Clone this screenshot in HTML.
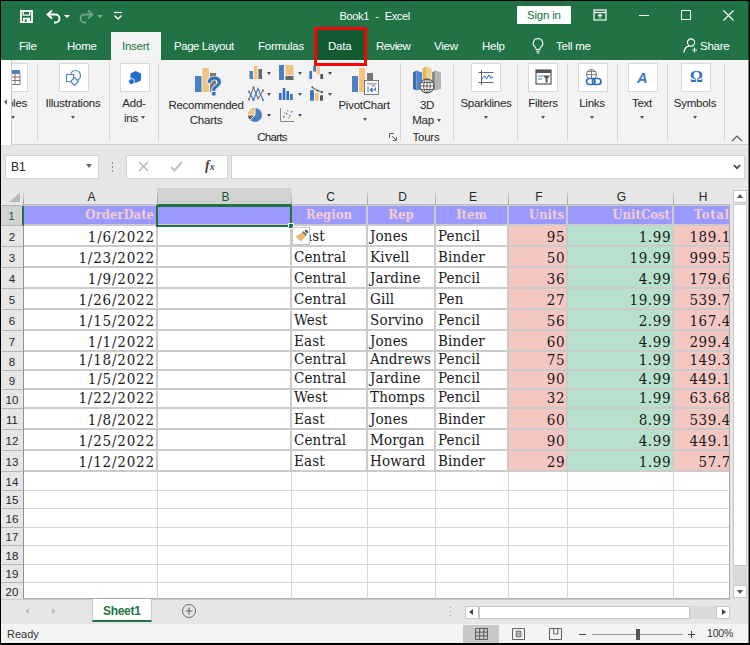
<!DOCTYPE html>
<html lang="en">
<head>
<meta charset="utf-8">
<title>Book1 - Excel</title>
<style>
*{box-sizing:border-box;margin:0;padding:0}
html,body{width:750px;height:645px;overflow:hidden;background:#000}
body{font-family:"Liberation Sans",sans-serif;font-size:12px;color:#262626;position:relative}
#app{position:absolute;left:1px;top:1px;width:748px;height:642px;background:#e6e6e6;overflow:hidden}
#app>*{position:absolute}
.abs{position:absolute}
/* coordinates inside #app are offset by -1 from page coordinates; use wrapper */
#w{position:absolute;left:-1px;top:-1px;width:750px;height:645px}
#w>*{position:absolute}
#title{left:0;top:0;width:750px;height:60px;background:#217346}
#title *{position:absolute}
.tt{color:#fff;font-size:11.5px;letter-spacing:-.2px;white-space:nowrap;line-height:14px}
#tabs span{color:#fff;font-size:11.5px;letter-spacing:-.25px;top:38px;line-height:16px;white-space:nowrap}
#ribbon{left:0;top:60px;width:750px;height:85px;background:#f3f3f3;border-bottom:1px solid #d0d0d0}
#ribbon *{position:absolute}
.sep{width:1px;background:#d4d4d4;top:3px;height:78px}
.lbl{font-size:11.5px;letter-spacing:-.25px;color:#262626;white-space:nowrap;text-align:center;line-height:17px;transform:translateX(-50%)}
.ibox{width:30px;height:29px;background:#fff;border:1px solid #d9d9d9;top:3px}
.dd{width:0;height:0;margin-left:.5px;border-left:2.500px solid transparent;border-right:2.500px solid transparent;border-top:3px solid #555}
#fbar{left:0;top:145px;width:750px;height:43px;background:#e6e6e6}
#fbar *{position:absolute}
#grid{left:0;top:0;width:731px;height:599px;background:transparent}
#grid *{position:absolute}
#gridbg{left:23px;top:205px;width:707px;height:394px;background:#fff;border-right:1px solid #ababab;border-bottom:1px solid #b0b0b0}
.vl{width:1px;top:205px;height:394px;background:#d6d6d6}
.hl{height:1px;left:23px;width:706px;background:#d6d6d6}
.cl{background:#fff;border:0 solid #cbcbcb;border-left-width:2px;border-top-width:2px;font-family:"DejaVu Serif Condensed","DejaVu Serif","Liberation Serif",serif;font-size:15px;color:#1a1a1a;white-space:nowrap;overflow:hidden}
.cl span{position:static!important}
.cl.ar{text-align:right;padding-right:.9px;letter-spacing:.6px}
.cl.ar span{position:relative!important;top:1px}
.cl.dt{letter-spacing:.8px;padding-right:1.2px}
.cl.last{padding-right:0}
.cl.last span{margin-right:-2px}
.cl.al{letter-spacing:.15px}
.cl.cd{padding-left:4px}
.cl.al{text-align:left;padding-left:2px}
.cl.ac{text-align:center}
.cl.h{background:#9999ff;color:#f6ccd0;font-weight:bold;font-size:13px;letter-spacing:0;padding-top:0}
.cl.h span{position:relative!important;top:-1.500px!important}
.cl.h.ar{padding-right:2px}
.cl.h.last{padding-right:0;letter-spacing:.7px}
.cl.h.last span{margin-right:-.7px}
.cl.lr{border-bottom-width:2px}
.cl.pk{background:#f4c7c3}
.cl.gn{background:#b7e1cd}
#colhdr *,#rowhdr *{position:absolute}
.ch{top:188px;height:17px;background:#e6e6e6;border-bottom:1px solid #bdbdbd;text-align:center;padding-left:3px;font-size:12px;line-height:18px;color:#262626}
.ch::before{content:"";position:absolute;left:0;top:1px;width:1px;height:16px;background:linear-gradient(rgba(150,150,150,0),#999)}
.ch.sel{background:#d2d2d2;color:#185a34;border-bottom:2px solid #217346;height:18px}
.rh{left:1px;width:23px;background:#e6e6e6;border-bottom:1px solid #b4b4b4;border-right:1px solid #929292;text-align:center;font-size:11.500px;color:#262626}
.rh.sel{background:#d2d2d2;color:#185a34;border-right:2px solid #217346}
#sheetbar{left:0;top:599px;width:750px;height:25px;background:#e6e6e6}
#sheetbar *{position:absolute}
#status{left:0;top:624px;width:750px;height:19px;background:#f3f3f3}
#status *{position:absolute}
</style>
</head>
<body>
<div id="app"><div id="w">

<!-- ================= TITLE + TABS ================= -->
<div id="title">
  <!-- save -->
  <svg style="left:20px;top:10px" width="13" height="13" viewBox="0 0 13 13"><path d="M1 1h11v11h-11z" fill="none" stroke="#fff" stroke-width="1.800"/><path d="M3.300 1v4.200h6.400v-4.200" fill="none" stroke="#fff" stroke-width="1.300"/><path d="M3 12v-4.300h7v4.300z" fill="#fff"/><rect x="4.800" y="9.300" width="1.800" height="2.700" fill="#217346"/></svg>
  <!-- undo -->
  <svg style="left:45px;top:8px" width="18" height="16" viewBox="0 0 18 16"><path d="M7 2.5L2.5 6.5L7 10.5" fill="none" stroke="#fff" stroke-width="1.8"/><path d="M3 6.5h7.5a4 4 0 0 1 0 8h-1.5" fill="none" stroke="#fff" stroke-width="1.8"/></svg>
  <i style="left:64px;top:15px;border-left:3px solid transparent;border-right:3px solid transparent;border-top:3px solid #fff;width:0;height:0"></i>
  <!-- redo faded -->
  <svg style="left:77px;top:8px;opacity:.35" width="18" height="16" viewBox="0 0 18 16"><path d="M11 2.5L15.5 6.5L11 10.5" fill="none" stroke="#fff" stroke-width="1.8"/><path d="M15 6.5h-7.500a4 4 0 0 0 0 8h1.500" fill="none" stroke="#fff" stroke-width="1.8"/></svg>
  <i style="left:97px;top:15px;opacity:.4;border-left:3px solid transparent;border-right:3px solid transparent;border-top:3px solid #fff;width:0;height:0"></i>
  <!-- qat customize -->
  <svg style="left:113px;top:11px" width="10" height="10" viewBox="0 0 10 10"><path d="M1 1.5h8" stroke="#fff" stroke-width="1.2"/><path d="M1.5 4.5L5 8L8.500 4.500" fill="none" stroke="#fff" stroke-width="1.3"/></svg>

  <span class="tt" style="left:339.500px;top:9px;font-size:11px;letter-spacing:-.35px;word-spacing:3.500px">Book1 - Excel</span>

  <div style="left:517px;top:6px;width:54px;height:18px;background:#fff;border-radius:1px"></div>
  <span class="tt" style="left:527px;top:8px;color:#217346">Sign in</span>

  <!-- ribbon display options -->
  <svg style="left:593px;top:9px" width="14" height="13" viewBox="0 0 14 13"><rect x="1" y="1" width="12" height="10" fill="none" stroke="#fff" stroke-width="1.2"/><path d="M1 3.500h12" stroke="#fff" stroke-width="1.2"/><path d="M7 9.500V5.500M5 7.200L7 5.300L9 7.200" fill="none" stroke="#fff" stroke-width="1.1"/></svg>
  <i style="left:639px;top:15px;width:10px;height:1px;background:#fff"></i>
  <i style="left:681px;top:10px;width:10px;height:10px;border:1px solid #fff"></i>
  <svg style="left:723px;top:10px" width="11" height="11" viewBox="0 0 11 11"><path d="M.5 .5l10 10M10.500 .5l-10 10" stroke="#fff" stroke-width="1.1"/></svg>

  <div id="tabs">
    <div style="left:111px;top:32px;width:50px;height:28px;background:#f3f3f3"></div>
    <div style="left:317px;top:30px;width:47px;height:30px;background:#125b32"></div>
    <span style="left:19px">File</span>
    <span style="left:67px">Home</span>
    <span style="left:122px;color:#217346">Insert</span>
    <span style="left:174px;letter-spacing:-.45px">Page Layout</span>
    <span style="left:258px">Formulas</span>
    <span style="left:328px">Data</span>
    <span style="left:376px;letter-spacing:-.6px">Review</span>
    <span style="left:434px">View</span>
    <span style="left:482px">Help</span>
    <!-- bulb -->
    <svg style="left:531px;top:37px" width="14" height="18" viewBox="0 0 14 18"><path d="M7 1.500a4.800 4.800 0 0 0 -2.600 8.800c.6 .6 .8 1.300 .8 2.200h3.600c0 -.9 .2 -1.600 .8 -2.200a4.800 4.800 0 0 0 -2.600 -8.800z" fill="none" stroke="#fff" stroke-width="1.1"/><path d="M5.200 14.200h3.600M5.700 16h2.600" stroke="#fff" stroke-width="1"/></svg>
    <span style="left:556px">Tell me</span>
    <!-- share icon -->
    <svg style="left:683px;top:37px" width="16" height="17" viewBox="0 0 16 17"><circle cx="8" cy="5.500" r="3.600" fill="none" stroke="#fff" stroke-width="1.2"/><path d="M1 15.500c.4 -4 2.600 -6 5 -6.300" fill="none" stroke="#fff" stroke-width="1.2"/><path d="M11.500 10.500v5M9 13h5" stroke="#fff" stroke-width="1.2"/></svg>
    <span style="left:700px">Share</span>
  </div>
  <!-- red highlight -->
  <div style="left:314px;top:27px;width:53px;height:39px;border:3px solid #fa0307;z-index:5"></div>
</div>

<!-- ================= RIBBON ================= -->
<div id="ribbon">
  <div style="left:1px;top:0;width:11px;height:85px;background:#fff;border-right:1px solid #c6c6c6;z-index:3"></div>
  <i style="left:4px;top:39px;z-index:4;width:0;height:0;border-top:3px solid transparent;border-bottom:3px solid transparent;border-right:3px solid #666"></i>

  <!-- Tables (cut) -->
  <div class="ibox" style="left:11px;width:17px;border-left:none"></div>
  <svg style="left:11px;top:9px" width="10" height="18" viewBox="0 0 10 18"><rect x="0" y="1" width="9" height="3.500" fill="#4a7fc1"/><path d="M0 4.500h9v11h-9M0 8h9M0 11.500h9M4 4.500v11" fill="none" stroke="#777" stroke-width="1"/></svg>
  <span class="lbl" style="left:17px;top:35px">bles</span>
  <i class="dd" style="left:10px;top:56px"></i>
  <i class="sep" style="left:37px"></i>

  <!-- Illustrations -->
  <div class="ibox" style="left:59px"></div>
  <svg style="left:64px;top:8px" width="20" height="20" viewBox="0 0 20 20"><circle cx="11.500" cy="7.500" r="5" fill="none" stroke="#4a7fc1" stroke-width="1.1"/><path d="M2.500 6.500h7v7h-7z" fill="#fff" stroke="#4a7fc1" stroke-width="1.100"/><path d="M10.500 9.500l4 4l-4 4l-4 -4z" fill="#fff" stroke="#4a7fc1" stroke-width="1.100"/></svg>
  <span class="lbl" style="left:73px;top:35px">Illustrations</span>
  <i class="dd" style="left:70px;top:56px"></i>
  <i class="sep" style="left:109px"></i>

  <!-- Add-ins -->
  <div class="ibox" style="left:120px"></div>
  <svg style="left:126px;top:9px" width="18" height="18" viewBox="0 0 18 18"><path d="M9.500 2l5.500 2.500v7l-5.500 2.500l-5 -2.500v-7z" fill="#1f6fd0"/><circle cx="5.500" cy="12.500" r="3" fill="#1f6fd0" stroke="#fff" stroke-width="1"/></svg>
  <span class="lbl" style="left:134px;top:35px">Add-</span>
  <span class="lbl" style="left:131px;top:50px">ins</span>
  <i class="dd" style="left:140px;top:56px"></i>
  <i class="sep" style="left:158px"></i>

  <!-- Recommended Charts -->
  <svg style="left:193px;top:6px" width="30" height="32" viewBox="0 0 30 32"><rect x="2" y="10" width="6.500" height="16" fill="#4a7fc1"/><rect x="9.500" y="2" width="6.500" height="24" fill="#f0c47c"/><rect x="17" y="7" width="6" height="19" fill="#777"/><text x="14" y="29" font-family="Liberation Sans, sans-serif" font-size="25.500" fill="#2e6fc0" stroke="#f3f3f3" stroke-width="2.600" paint-order="stroke">?</text><text x="14" y="29" font-family="Liberation Sans, sans-serif" font-size="25.500" fill="#3571bd" stroke="#3571bd" stroke-width=".9">?</text></svg>
  <span class="lbl" style="left:206px;top:37px">Recommended</span>
  <span class="lbl" style="left:206px;top:52px">Charts</span>

  <!-- small chart icons col 1 -->
  <svg style="left:249px;top:4px" width="16" height="16" viewBox="0 0 16 16"><rect x=".5" y="7" width="3.500" height="8" fill="#4a7fc1"/><rect x="5" y="2" width="3.500" height="13" fill="#f0c47c"/><rect x="9.500" y="5" width="3.500" height="10" fill="#666"/></svg>
  <i class="dd" style="left:266px;top:12px"></i>
  <svg style="left:247px;top:26px" width="18" height="16" viewBox="0 0 18 16"><path d="M2 13.500L6.500 1.500L11 13L16 4.500" fill="none" stroke="#777" stroke-width="1.100"/><path d="M2 5.500L6.500 14L11 2.500L16 14" fill="none" stroke="#3b78c4" stroke-width="1.200"/><g fill="#3b78c4"><circle cx="2" cy="5.500" r="1"/><circle cx="6.500" cy="14" r="1"/><circle cx="16" cy="14" r="1"/></g><g fill="#666"><circle cx="2" cy="13.500" r="1"/><circle cx="6.500" cy="1.500" r="1"/><circle cx="16" cy="4.500" r="1"/></g></svg>
  <i class="dd" style="left:266px;top:33px"></i>
  <svg style="left:247px;top:46.500px" width="16" height="16" viewBox="0 0 16 16"><circle cx="8" cy="8" r="7" fill="#4a7fc1"/><path d="M8 8V1A7 7 0 0 0 1 8z" fill="#f0c47c"/><path d="M8 8H1a7 7 0 0 0 2.100 5z" fill="#666"/><path d="M8 1V8H1M8 8l-4.900 5" stroke="#f3f3f3" stroke-width="1" fill="none"/></svg>
  <i class="dd" style="left:266px;top:54px"></i>

  <!-- col 2 -->
  <svg style="left:278px;top:4px" width="16" height="16" viewBox="0 0 16 16"><rect x="1" y="1" width="5" height="15" fill="#4a7fc1"/><rect x="7.500" y="1" width="8" height="10" fill="#f0c47c"/><rect x="7.500" y="12" width="8" height="4" fill="#666"/></svg>
  <i class="dd" style="left:297px;top:12px"></i>
  <svg style="left:278px;top:26px" width="16" height="16" viewBox="0 0 16 16"><rect x="1" y="7" width="2.600" height="7" fill="#2e6fc0"/><rect x="4.700" y="2" width="2.600" height="12" fill="#2e6fc0"/><rect x="8.400" y="5" width="2.600" height="9" fill="#2e6fc0"/><rect x="12.100" y="8" width="2.600" height="6" fill="#2e6fc0"/></svg>
  <i class="dd" style="left:297px;top:33px"></i>
  <svg style="left:279px;top:47px" width="16" height="16" viewBox="0 0 16 16"><path d="M1.500 1v13.500H15" fill="none" stroke="#888" stroke-width="1"/><g fill="#4a7fc1"><rect x="4" y="9" width="1.500" height="1.500"/><rect x="7" y="6" width="1.500" height="1.500"/><rect x="10" y="8" width="1.500" height="1.500"/><rect x="12" y="4" width="1.500" height="1.500"/></g><g fill="#f0a030"><rect x="5" y="5" width="1.500" height="1.500"/><rect x="9" y="10" width="1.500" height="1.500"/><rect x="8" y="3" width="1.500" height="1.500"/></g></svg>
  <i class="dd" style="left:297px;top:54px"></i>

  <!-- col 3 -->
  <svg style="left:308px;top:4px" width="16" height="16" viewBox="0 0 16 16"><rect x="1.300" y="7" width="2.800" height="8" fill="#3f78bd"/><rect x="5.200" y="2" width="2.800" height="5.600" fill="#3f78bd"/><rect x="8.700" y="2.500" width="3.100" height="7.800" fill="#f0c47c"/><rect x="12.300" y="10" width="2.800" height="5" fill="#555"/><path d="M4.100 7.300h1.100M11.800 10.200h.5" stroke="#fff" stroke-width=".8" fill="none"/></svg>
  <i class="dd" style="left:327px;top:12px"></i>
  <svg style="left:308px;top:26px" width="16" height="16" viewBox="0 0 16 16"><rect x="2" y="4.200" width="4" height="10.500" fill="#3f78bd"/><rect x="7" y="7" width="3.600" height="7.700" fill="#f0c47c"/><rect x="12" y="9.300" width="3" height="5.400" fill="#555"/><path d="M4.400 1.500L9.400 4.500L14 6.200" stroke="#555" stroke-width="1" fill="none"/><g fill="#555"><circle cx="4.400" cy="1.500" r="1.100"/><circle cx="9.400" cy="4.500" r="1.100"/><circle cx="14" cy="6.200" r="1.100"/></g></svg>
  <i class="dd" style="left:327px;top:33px"></i>

  <!-- PivotChart -->
  <svg style="left:350px;top:6px" width="32" height="32" viewBox="0 0 32 32"><rect x="2" y="10" width="6" height="16" fill="#4a7fc1"/><rect x="9" y="2" width="6" height="24" fill="#f0c47c"/><rect x="17" y="7" width="6" height="12" fill="#777"/><rect x="14.500" y="14.500" width="14" height="14" fill="#fff" stroke="#777" stroke-width="1"/><rect x="17" y="16.800" width="9.500" height="2" fill="#b5b5b5"/><rect x="17" y="20" width="2" height="6.500" fill="#b5b5b5"/><path d="M25.500 21.500v2.500h-4.500M22.500 22l-2 2l2 2" stroke="#2e6fc0" stroke-width="1.200" fill="none"/><path d="M22 20.500l1.500 -1.500l1.500 1.500" stroke="#2e6fc0" stroke-width="1" fill="none"/></svg>
  <span class="lbl" style="left:364px;top:37px">PivotChart</span>
  <i class="dd" style="left:362px;top:58px"></i>

  <span class="lbl" style="left:272px;top:69px;letter-spacing:-.7px">Charts</span>
  <svg style="left:389px;top:73px" width="9" height="9" viewBox="0 0 9 9"><path d="M.5 5V.5H5" fill="none" stroke="#666" stroke-width="1"/><path d="M3 3l4.500 4.500M7.500 4v3.500H4" fill="none" stroke="#666" stroke-width="1"/></svg>
  <i class="sep" style="left:400px"></i>

  <!-- 3D Map -->
  <svg style="left:411px;top:5px" width="32" height="34" viewBox="0 0 32 34"><path d="M2 7.500l3.500 -2v20l-3.500 -1.500z" fill="#3a6fb5"/><path d="M5.500 5.500l5.500 2v16.500l-5.500 1.500z" fill="#4f88cf"/><path d="M11.500 3.500l3.500 -2v24l-3.500 -1.500z" fill="#e6b55e"/><path d="M15 1.500l5.500 2v20.500l-5.500 1.500z" fill="#f3cf8f"/><path d="M21 7.500l3.500 -2v20l-3.500 -1.500z" fill="#8a8a8a"/><path d="M24.500 5.500l5.500 2v16.500l-5.500 1.500z" fill="#b4b4b4"/><circle cx="16" cy="21" r="7" fill="#fff" stroke="#555" stroke-width="1.100"/><path d="M9 21h14M16 14v14M10.500 17.500h11M10.500 24.500h11" stroke="#555" stroke-width=".9" fill="none"/><ellipse cx="16" cy="21" rx="3.300" ry="7" fill="none" stroke="#555" stroke-width=".9"/></svg>
  <span class="lbl" style="left:427px;top:37px">3D</span>
  <span class="lbl" style="left:423px;top:52px">Map</span>
  <i class="dd" style="left:436px;top:59px"></i>
  <span class="lbl" style="left:426px;top:69px">Tours</span>
  <i class="sep" style="left:453px"></i>

  <!-- Sparklines -->
  <div class="ibox" style="left:471px"></div>
  <svg style="left:477px;top:9px" width="18" height="18" viewBox="0 0 18 18"><path d="M4.500 1v15M1.500 3.500h15M1.500 13.500h15" stroke="#666" stroke-width="1" fill="none"/><path d="M5 10l2.500 -3l2 2.500l2.500 -3.500l2 3l2 -1.500" stroke="#4a7fc1" stroke-width="1.100" fill="none"/></svg>
  <span class="lbl" style="left:486px;top:35px">Sparklines</span>
  <i class="dd" style="left:483px;top:56px"></i>
  <i class="sep" style="left:517px"></i>

  <!-- Filters -->
  <div class="ibox" style="left:528px"></div>
  <svg style="left:535px;top:9px" width="17" height="17" viewBox="0 0 17 17"><rect x="1" y="1" width="15" height="14" fill="#fff" stroke="#555" stroke-width="1.200"/><rect x="1" y="1" width="15" height="3" fill="#555"/><path d="M3 7h5M3 10h4" stroke="#7aa7dd" stroke-width="1.300"/><path d="M8 6.500h7l-2.500 3v4h-2v-4z" fill="#555"/></svg>
  <span class="lbl" style="left:543px;top:35px">Filters</span>
  <i class="dd" style="left:540px;top:56px"></i>
  <i class="sep" style="left:567px"></i>

  <!-- Links -->
  <div class="ibox" style="left:578px"></div>
  <svg style="left:584px;top:8px" width="19" height="20" viewBox="0 0 19 20"><circle cx="7.500" cy="6.500" r="5" fill="#fff" stroke="#777" stroke-width="1"/><path d="M2.500 6.500h10M7.500 1.500v10M3.500 3.500h8" stroke="#777" stroke-width=".9" fill="none"/><rect x="2.500" y="10.500" width="8.500" height="6" rx="3" fill="#fff" stroke="#2e6fc0" stroke-width="1.700"/><rect x="8.500" y="10.500" width="8.500" height="6" rx="3" fill="none" stroke="#2e6fc0" stroke-width="1.700"/></svg>
  <span class="lbl" style="left:592px;top:35px">Links</span>
  <i class="dd" style="left:589px;top:56px"></i>
  <i class="sep" style="left:617px"></i>

  <!-- Text -->
  <div class="ibox" style="left:628px"></div>
  <span style="left:637px;top:8px;font:italic bold 14.500px 'Liberation Sans',sans-serif;color:#3c78c8;line-height:20px">A</span>
  <span class="lbl" style="left:642px;top:35px">Text</span>
  <i class="dd" style="left:639px;top:56px"></i>
  <i class="sep" style="left:667px"></i>

  <!-- Symbols -->
  <div class="ibox" style="left:681px"></div>
  <span style="left:690px;top:7px;font:bold 16px 'Liberation Serif',serif;color:#2e6fc0;line-height:20px">Ω</span>
  <span class="lbl" style="left:695px;top:35px">Symbols</span>
  <i class="dd" style="left:692px;top:56px"></i>
  <i class="sep" style="left:724px"></i>

  <svg style="left:731px;top:75px" width="12" height="7" viewBox="0 0 12 7"><path d="M1 6l5 -5l5 5" fill="none" stroke="#555" stroke-width="1.100"/></svg>
</div>

<!-- ================= FORMULA BAR ================= -->
<div id="fbar">
  <div style="left:5px;top:10px;width:94px;height:24px;background:#fff;border:1px solid #d4d4d4"></div>
  <span style="left:11px;top:14px;font-size:12px;line-height:16px;color:#262626">B1</span>
  <i class="dd" style="left:85px;top:19px;border-left-width:3.500px;border-right-width:3.500px;border-top:4px solid #666"></i>
  <i style="left:111.500px;top:17px;width:1.500px;height:1.500px;background:#8a8a8a;box-shadow:0 4px 0 #8a8a8a,0 8px 0 #8a8a8a"></i>
  <div style="left:126px;top:10px;width:102px;height:24px;background:#fff;border:1px solid #d4d4d4"></div>
  <svg style="left:138px;top:16px" width="11" height="11" viewBox="0 0 11 11"><path d="M1 1l9 9M10 1l-9 9" stroke="#b0b0b0" stroke-width="1.200"/></svg>
  <svg style="left:170px;top:16px" width="13" height="11" viewBox="0 0 13 11"><path d="M1 6l3.500 3.500L12 1" fill="none" stroke="#c0c0c0" stroke-width="1.900"/></svg>
  <span style="left:205px;top:12px;font:italic bold 14px 'Liberation Serif',serif;color:#444;line-height:18px">f<span style="position:static;font-size:9.500px">x</span></span>
  <div style="left:231px;top:10px;width:514px;height:24px;background:#fff;border:1px solid #d4d4d4"></div>
  <svg style="left:733px;top:18.500px" width="8" height="6" viewBox="0 0 8 6"><path d="M.8 1l3.200 3.200L7.200 1" fill="none" stroke="#444" stroke-width="1.700"/></svg>
</div>

<!-- ================= GRID ================= -->
<div style="left:1px;top:188px;width:23px;height:18px;background:#e6e6e6;border-bottom:1px solid #b4b4b4"></div><i style="left:23px;top:189px;width:1px;height:17px;background:linear-gradient(rgba(150,150,150,0),#929292)"></i>
<i style="left:10px;top:192px;width:0;height:0;border-left:10px solid transparent;border-bottom:10px solid #b8b8b8"></i>
<div id="gridbg"></div>
<div id="grid">
<i class="vl" style="left:157px"></i>
<i class="vl" style="left:291px"></i>
<i class="vl" style="left:367px"></i>
<i class="vl" style="left:435px"></i>
<i class="vl" style="left:508px"></i>
<i class="vl" style="left:567px"></i>
<i class="vl" style="left:673px"></i>
<i class="hl" style="top:225px"></i>
<i class="hl" style="top:246px"></i>
<i class="hl" style="top:267px"></i>
<i class="hl" style="top:288px"></i>
<i class="hl" style="top:309px"></i>
<i class="hl" style="top:330px"></i>
<i class="hl" style="top:351px"></i>
<i class="hl" style="top:370px"></i>
<i class="hl" style="top:389px"></i>
<i class="hl" style="top:408px"></i>
<i class="hl" style="top:429px"></i>
<i class="hl" style="top:450px"></i>
<i class="hl" style="top:471px"></i>
<i class="hl" style="top:490px"></i>
<i class="hl" style="top:508px"></i>
<i class="hl" style="top:527px"></i>
<i class="hl" style="top:545px"></i>
<i class="hl" style="top:564px"></i>
<i class="hl" style="top:582px"></i>
<div class="cl h ar" style="left:22px;top:204px;width:134px;height:20px;line-height:19px"><span>OrderDate</span></div>
<div class="cl h ac" style="left:156px;top:204px;width:134px;height:20px;line-height:19px"><span></span></div>
<div class="cl h ac" style="left:290px;top:204px;width:76px;height:20px;line-height:19px"><span>Region</span></div>
<div class="cl h ac" style="left:366px;top:204px;width:68px;height:20px;line-height:19px"><span>Rep</span></div>
<div class="cl h ac" style="left:434px;top:204px;width:73px;height:20px;line-height:19px"><span>Item</span></div>
<div class="cl h ar" style="left:507px;top:204px;width:59px;height:20px;line-height:19px"><span>Units</span></div>
<div class="cl h ar" style="left:566px;top:204px;width:106px;height:20px;line-height:19px"><span>UnitCost</span></div>
<div class="cl h ar last" style="left:672px;top:204px;width:57px;height:20px;line-height:19px"><span>Total</span></div>
<div class="cl ar dt" style="left:22px;top:224px;width:134px;height:21px;line-height:20px"><span>1/6/2022</span></div>
<div class="cl al" style="left:156px;top:224px;width:134px;height:21px;line-height:20px"><span></span></div>
<div class="cl al" style="left:290px;top:224px;width:76px;height:21px;line-height:20px"><span>East</span></div>
<div class="cl al cd" style="left:366px;top:224px;width:68px;height:21px;line-height:20px"><span>Jones</span></div>
<div class="cl al" style="left:434px;top:224px;width:73px;height:21px;line-height:20px"><span>Pencil</span></div>
<div class="cl ar pk" style="left:507px;top:224px;width:59px;height:21px;line-height:20px"><span>95</span></div>
<div class="cl ar gn" style="left:566px;top:224px;width:106px;height:21px;line-height:20px"><span>1.99</span></div>
<div class="cl ar pk last" style="left:672px;top:224px;width:57px;height:21px;line-height:20px"><span>189.1</span></div>
<div class="cl ar dt" style="left:22px;top:245px;width:134px;height:21px;line-height:20px"><span>1/23/2022</span></div>
<div class="cl al" style="left:156px;top:245px;width:134px;height:21px;line-height:20px"><span></span></div>
<div class="cl al" style="left:290px;top:245px;width:76px;height:21px;line-height:20px"><span>Central</span></div>
<div class="cl al cd" style="left:366px;top:245px;width:68px;height:21px;line-height:20px"><span>Kivell</span></div>
<div class="cl al" style="left:434px;top:245px;width:73px;height:21px;line-height:20px"><span>Binder</span></div>
<div class="cl ar pk" style="left:507px;top:245px;width:59px;height:21px;line-height:20px"><span>50</span></div>
<div class="cl ar gn" style="left:566px;top:245px;width:106px;height:21px;line-height:20px"><span>19.99</span></div>
<div class="cl ar pk last" style="left:672px;top:245px;width:57px;height:21px;line-height:20px"><span>999.5</span></div>
<div class="cl ar dt" style="left:22px;top:266px;width:134px;height:21px;line-height:20px"><span>1/9/2022</span></div>
<div class="cl al" style="left:156px;top:266px;width:134px;height:21px;line-height:20px"><span></span></div>
<div class="cl al" style="left:290px;top:266px;width:76px;height:21px;line-height:20px"><span>Central</span></div>
<div class="cl al cd" style="left:366px;top:266px;width:68px;height:21px;line-height:20px"><span>Jardine</span></div>
<div class="cl al" style="left:434px;top:266px;width:73px;height:21px;line-height:20px"><span>Pencil</span></div>
<div class="cl ar pk" style="left:507px;top:266px;width:59px;height:21px;line-height:20px"><span>36</span></div>
<div class="cl ar gn" style="left:566px;top:266px;width:106px;height:21px;line-height:20px"><span>4.99</span></div>
<div class="cl ar pk last" style="left:672px;top:266px;width:57px;height:21px;line-height:20px"><span>179.6</span></div>
<div class="cl ar dt" style="left:22px;top:287px;width:134px;height:21px;line-height:20px"><span>1/26/2022</span></div>
<div class="cl al" style="left:156px;top:287px;width:134px;height:21px;line-height:20px"><span></span></div>
<div class="cl al" style="left:290px;top:287px;width:76px;height:21px;line-height:20px"><span>Central</span></div>
<div class="cl al cd" style="left:366px;top:287px;width:68px;height:21px;line-height:20px"><span>Gill</span></div>
<div class="cl al" style="left:434px;top:287px;width:73px;height:21px;line-height:20px"><span>Pen</span></div>
<div class="cl ar pk" style="left:507px;top:287px;width:59px;height:21px;line-height:20px"><span>27</span></div>
<div class="cl ar gn" style="left:566px;top:287px;width:106px;height:21px;line-height:20px"><span>19.99</span></div>
<div class="cl ar pk last" style="left:672px;top:287px;width:57px;height:21px;line-height:20px"><span>539.7</span></div>
<div class="cl ar dt" style="left:22px;top:308px;width:134px;height:21px;line-height:20px"><span>1/15/2022</span></div>
<div class="cl al" style="left:156px;top:308px;width:134px;height:21px;line-height:20px"><span></span></div>
<div class="cl al" style="left:290px;top:308px;width:76px;height:21px;line-height:20px"><span>West</span></div>
<div class="cl al cd" style="left:366px;top:308px;width:68px;height:21px;line-height:20px"><span>Sorvino</span></div>
<div class="cl al" style="left:434px;top:308px;width:73px;height:21px;line-height:20px"><span>Pencil</span></div>
<div class="cl ar pk" style="left:507px;top:308px;width:59px;height:21px;line-height:20px"><span>56</span></div>
<div class="cl ar gn" style="left:566px;top:308px;width:106px;height:21px;line-height:20px"><span>2.99</span></div>
<div class="cl ar pk last" style="left:672px;top:308px;width:57px;height:21px;line-height:20px"><span>167.4</span></div>
<div class="cl ar dt" style="left:22px;top:329px;width:134px;height:21px;line-height:20px"><span>1/1/2022</span></div>
<div class="cl al" style="left:156px;top:329px;width:134px;height:21px;line-height:20px"><span></span></div>
<div class="cl al" style="left:290px;top:329px;width:76px;height:21px;line-height:20px"><span>East</span></div>
<div class="cl al cd" style="left:366px;top:329px;width:68px;height:21px;line-height:20px"><span>Jones</span></div>
<div class="cl al" style="left:434px;top:329px;width:73px;height:21px;line-height:20px"><span>Binder</span></div>
<div class="cl ar pk" style="left:507px;top:329px;width:59px;height:21px;line-height:20px"><span>60</span></div>
<div class="cl ar gn" style="left:566px;top:329px;width:106px;height:21px;line-height:20px"><span>4.99</span></div>
<div class="cl ar pk last" style="left:672px;top:329px;width:57px;height:21px;line-height:20px"><span>299.4</span></div>
<div class="cl ar dt" style="left:22px;top:350px;width:134px;height:19px;line-height:15px"><span>1/18/2022</span></div>
<div class="cl al" style="left:156px;top:350px;width:134px;height:19px;line-height:15px"><span></span></div>
<div class="cl al" style="left:290px;top:350px;width:76px;height:19px;line-height:15px"><span>Central</span></div>
<div class="cl al cd" style="left:366px;top:350px;width:68px;height:19px;line-height:15px"><span>Andrews</span></div>
<div class="cl al" style="left:434px;top:350px;width:73px;height:19px;line-height:15px"><span>Pencil</span></div>
<div class="cl ar pk" style="left:507px;top:350px;width:59px;height:19px;line-height:15px"><span>75</span></div>
<div class="cl ar gn" style="left:566px;top:350px;width:106px;height:19px;line-height:15px"><span>1.99</span></div>
<div class="cl ar pk last" style="left:672px;top:350px;width:57px;height:19px;line-height:15px"><span>149.3</span></div>
<div class="cl ar dt" style="left:22px;top:369px;width:134px;height:19px;line-height:15px"><span>1/5/2022</span></div>
<div class="cl al" style="left:156px;top:369px;width:134px;height:19px;line-height:15px"><span></span></div>
<div class="cl al" style="left:290px;top:369px;width:76px;height:19px;line-height:15px"><span>Central</span></div>
<div class="cl al cd" style="left:366px;top:369px;width:68px;height:19px;line-height:15px"><span>Jardine</span></div>
<div class="cl al" style="left:434px;top:369px;width:73px;height:19px;line-height:15px"><span>Pencil</span></div>
<div class="cl ar pk" style="left:507px;top:369px;width:59px;height:19px;line-height:15px"><span>90</span></div>
<div class="cl ar gn" style="left:566px;top:369px;width:106px;height:19px;line-height:15px"><span>4.99</span></div>
<div class="cl ar pk last" style="left:672px;top:369px;width:57px;height:19px;line-height:15px"><span>449.1</span></div>
<div class="cl ar dt" style="left:22px;top:388px;width:134px;height:19px;line-height:15px"><span>1/22/2022</span></div>
<div class="cl al" style="left:156px;top:388px;width:134px;height:19px;line-height:15px"><span></span></div>
<div class="cl al" style="left:290px;top:388px;width:76px;height:19px;line-height:15px"><span>West</span></div>
<div class="cl al cd" style="left:366px;top:388px;width:68px;height:19px;line-height:15px"><span>Thomps</span></div>
<div class="cl al" style="left:434px;top:388px;width:73px;height:19px;line-height:15px"><span>Pencil</span></div>
<div class="cl ar pk" style="left:507px;top:388px;width:59px;height:19px;line-height:15px"><span>32</span></div>
<div class="cl ar gn" style="left:566px;top:388px;width:106px;height:19px;line-height:15px"><span>1.99</span></div>
<div class="cl ar pk last" style="left:672px;top:388px;width:57px;height:19px;line-height:15px"><span>63.68</span></div>
<div class="cl ar dt" style="left:22px;top:407px;width:134px;height:21px;line-height:20px"><span>1/8/2022</span></div>
<div class="cl al" style="left:156px;top:407px;width:134px;height:21px;line-height:20px"><span></span></div>
<div class="cl al" style="left:290px;top:407px;width:76px;height:21px;line-height:20px"><span>East</span></div>
<div class="cl al cd" style="left:366px;top:407px;width:68px;height:21px;line-height:20px"><span>Jones</span></div>
<div class="cl al" style="left:434px;top:407px;width:73px;height:21px;line-height:20px"><span>Binder</span></div>
<div class="cl ar pk" style="left:507px;top:407px;width:59px;height:21px;line-height:20px"><span>60</span></div>
<div class="cl ar gn" style="left:566px;top:407px;width:106px;height:21px;line-height:20px"><span>8.99</span></div>
<div class="cl ar pk last" style="left:672px;top:407px;width:57px;height:21px;line-height:20px"><span>539.4</span></div>
<div class="cl ar dt" style="left:22px;top:428px;width:134px;height:21px;line-height:20px"><span>1/25/2022</span></div>
<div class="cl al" style="left:156px;top:428px;width:134px;height:21px;line-height:20px"><span></span></div>
<div class="cl al" style="left:290px;top:428px;width:76px;height:21px;line-height:20px"><span>Central</span></div>
<div class="cl al cd" style="left:366px;top:428px;width:68px;height:21px;line-height:20px"><span>Morgan</span></div>
<div class="cl al" style="left:434px;top:428px;width:73px;height:21px;line-height:20px"><span>Pencil</span></div>
<div class="cl ar pk" style="left:507px;top:428px;width:59px;height:21px;line-height:20px"><span>90</span></div>
<div class="cl ar gn" style="left:566px;top:428px;width:106px;height:21px;line-height:20px"><span>4.99</span></div>
<div class="cl ar pk last" style="left:672px;top:428px;width:57px;height:21px;line-height:20px"><span>449.1</span></div>
<div class="cl ar dt lr" style="left:22px;top:449px;width:134px;height:23px;line-height:20px"><span>1/12/2022</span></div>
<div class="cl al lr" style="left:156px;top:449px;width:134px;height:23px;line-height:20px"><span></span></div>
<div class="cl al lr" style="left:290px;top:449px;width:76px;height:23px;line-height:20px"><span>East</span></div>
<div class="cl al cd lr" style="left:366px;top:449px;width:68px;height:23px;line-height:20px"><span>Howard</span></div>
<div class="cl al lr" style="left:434px;top:449px;width:73px;height:23px;line-height:20px"><span>Binder</span></div>
<div class="cl ar pk lr" style="left:507px;top:449px;width:59px;height:23px;line-height:20px"><span>29</span></div>
<div class="cl ar gn lr" style="left:566px;top:449px;width:106px;height:23px;line-height:20px"><span>1.99</span></div>
<div class="cl ar pk last lr" style="left:672px;top:449px;width:57px;height:23px;line-height:20px"><span>57.7</span></div>
</div>
<div id="colhdr">
<div class="ch" style="left:23px;width:134px">A</div>
<div class="ch sel" style="left:157px;width:134px">B</div>
<div class="ch" style="left:291px;width:76px">C</div>
<div class="ch" style="left:367px;width:68px">D</div>
<div class="ch" style="left:435px;width:73px">E</div>
<div class="ch" style="left:508px;width:59px">F</div>
<div class="ch" style="left:567px;width:106px">G</div>
<div class="ch" style="left:673px;width:57px">H</div>
</div>
<div id="rowhdr">
<div class="rh sel" style="top:206px;height:20px;line-height:21px">1</div>
<div class="rh" style="top:226px;height:21px;line-height:22px">2</div>
<div class="rh" style="top:247px;height:21px;line-height:22px">3</div>
<div class="rh" style="top:268px;height:21px;line-height:22px">4</div>
<div class="rh" style="top:289px;height:21px;line-height:22px">5</div>
<div class="rh" style="top:310px;height:21px;line-height:22px">6</div>
<div class="rh" style="top:331px;height:21px;line-height:22px">7</div>
<div class="rh" style="top:352px;height:19px;line-height:20px">8</div>
<div class="rh" style="top:371px;height:19px;line-height:20px">9</div>
<div class="rh" style="top:390px;height:19px;line-height:20px">10</div>
<div class="rh" style="top:409px;height:21px;line-height:22px">11</div>
<div class="rh" style="top:430px;height:21px;line-height:22px">12</div>
<div class="rh" style="top:451px;height:21px;line-height:22px">13</div>
<div class="rh" style="top:472px;height:19px;line-height:20px">14</div>
<div class="rh" style="top:491px;height:18px;line-height:19px">15</div>
<div class="rh" style="top:509px;height:19px;line-height:20px">16</div>
<div class="rh" style="top:528px;height:18px;line-height:19px">17</div>
<div class="rh" style="top:546px;height:19px;line-height:20px">18</div>
<div class="rh" style="top:565px;height:18px;line-height:19px">19</div>
<div class="rh" style="top:583px;height:18px;line-height:19px">20</div>
</div>
<!-- selection -->
<div style="left:156px;top:205px;width:136px;height:22px;border:2px solid #217346;z-index:4"></div>
<div style="left:288px;top:223px;width:6px;height:6px;background:#217346;border:1px solid #fff;z-index:5"></div>
<!-- paste/format painter icon -->
<div style="left:292px;top:227px;width:18px;height:18px;background:#fff;border:1px solid #c8c8c8;z-index:6"></div>
<svg style="left:294px;top:229px;z-index:7" width="15" height="15" viewBox="0 0 15 15"><path d="M8 3.500l3.500 3.500l-4.500 5.500l-5.500 -5z" fill="#e8b96f"/><path d="M8 3.500l1.500 -1.500l3.500 3.500l-1.500 1.500z" fill="#777"/><path d="M10.500 1.800l1.500 -1.300l2.500 2.500l-1.300 1.500z" fill="#444"/></svg>

<!-- vertical scrollbar -->
<div style="left:731px;top:188px;width:18px;height:411px;background:#e6e6e6"></div>
<div style="left:733px;top:190px;width:14px;height:13px;background:#fff;border:1px solid #c8c8c8"></div>
<i style="left:737px;top:194px;width:0;height:0;border-left:3px solid transparent;border-right:3px solid transparent;border-bottom:4px solid #555"></i>
<div style="left:733px;top:204px;width:14px;height:381px;background:#dadada"></div><div style="left:733px;top:204px;width:14px;height:362px;background:#fff;border:1px solid #c8c8c8"></div>
<div style="left:733px;top:585px;width:14px;height:13px;background:#fff;border:1px solid #c8c8c8"></div>
<i style="left:737px;top:590px;width:0;height:0;border-left:3px solid transparent;border-right:3px solid transparent;border-top:4px solid #555"></i>

<!-- ================= SHEET BAR ================= -->
<div id="sheetbar">
  <div style="left:0;top:0;width:731px;height:1px;background:#c9c9c9"></div>
  <i style="left:25px;top:9px;width:0;height:0;border-top:3px solid transparent;border-bottom:3px solid transparent;border-right:4px solid #c0c0c0"></i>
  <i style="left:52px;top:9px;width:0;height:0;border-top:3px solid transparent;border-bottom:3px solid transparent;border-left:4px solid #c0c0c0"></i>
  <div style="left:92px;top:0;width:60px;height:23px;background:#fff;border-left:1px solid #c9c9c9;border-right:1px solid #c9c9c9;border-bottom:2px solid #217346"></div>
  <span style="left:103px;top:4px;font-weight:bold;font-size:12px;letter-spacing:-.3px;line-height:16px;color:#217346">Sheet1</span>
  <svg style="left:181px;top:4px" width="16" height="16" viewBox="0 0 16 16"><circle cx="8" cy="8" r="6.500" fill="none" stroke="#666" stroke-width="1"/><path d="M8 4.500v7M4.500 8h7" stroke="#666" stroke-width="1.200"/></svg>
  <i style="left:450px;top:8px;width:1px;height:1px;background:#999;box-shadow:0 4px 0 #999,0 8px 0 #999"></i>
  <div style="left:465px;top:7px;width:14px;height:13px;background:#fff;border:1px solid #c8c8c8"></div>
  <i style="left:469px;top:10px;width:0;height:0;border-top:3px solid transparent;border-bottom:3px solid transparent;border-right:4px solid #444"></i>
  <div style="left:479px;top:7px;width:211px;height:13px;background:#fff;border:1px solid #c8c8c8"></div>
  <div style="left:690px;top:7px;width:26px;height:13px;background:#dadada"></div>
  <div style="left:716px;top:7px;width:14px;height:13px;background:#fff;border:1px solid #c8c8c8"></div>
  <i style="left:722px;top:10px;width:0;height:0;border-top:3px solid transparent;border-bottom:3px solid transparent;border-left:4px solid #444"></i>
</div>

<div style="left:748px;top:0;width:1px;height:645px;background:rgba(0,0,0,.45);z-index:20"></div>
<!-- ================= STATUS BAR ================= -->
<div id="status">
  <span style="left:7px;top:3px;font-size:11px;line-height:15px;color:#333">Ready</span>
  <div style="left:463px;top:1px;width:36px;height:18px;background:#c8c8c8"></div>
  <svg style="left:475px;top:4px" width="13" height="12" viewBox="0 0 14 13"><path d="M.5 .5h13v12h-13zM.5 4.500h13M.5 8.500h13M5 .5v12M9.500 .5v12" fill="none" stroke="#555" stroke-width="1"/></svg>
  <svg style="left:512px;top:4px" width="13" height="12" viewBox="0 0 14 13"><path d="M.5 .5h13v12h-13z" fill="none" stroke="#555" stroke-width="1"/><path d="M4.500 3.500h5v6h-5zM5.500 5.500h3M5.500 7.500h3" fill="none" stroke="#555" stroke-width="1"/></svg>
  <svg style="left:549px;top:4px" width="13" height="12" viewBox="0 0 14 13"><path d="M.5 .5h13v12h-13z" fill="none" stroke="#555" stroke-width="1"/><path d="M5 .5v6h4.500v-6" fill="none" stroke="#555" stroke-width="1"/></svg>
  <i style="left:579px;top:10px;width:7px;height:1px;background:#444"></i>
  <i style="left:592px;top:10px;width:91px;height:1px;background:#999"></i>
  <i style="left:636px;top:5px;width:4px;height:11px;background:#555"></i>
  <i style="left:688px;top:10px;width:7px;height:1px;background:#444"></i>
  <i style="left:691px;top:7px;width:1px;height:7px;background:#444"></i>
  <span style="left:707px;top:2px;font-size:10.5px;letter-spacing:-.2px;line-height:15px;color:#333">100%</span>
</div>

</div></div>
</body>
</html>
